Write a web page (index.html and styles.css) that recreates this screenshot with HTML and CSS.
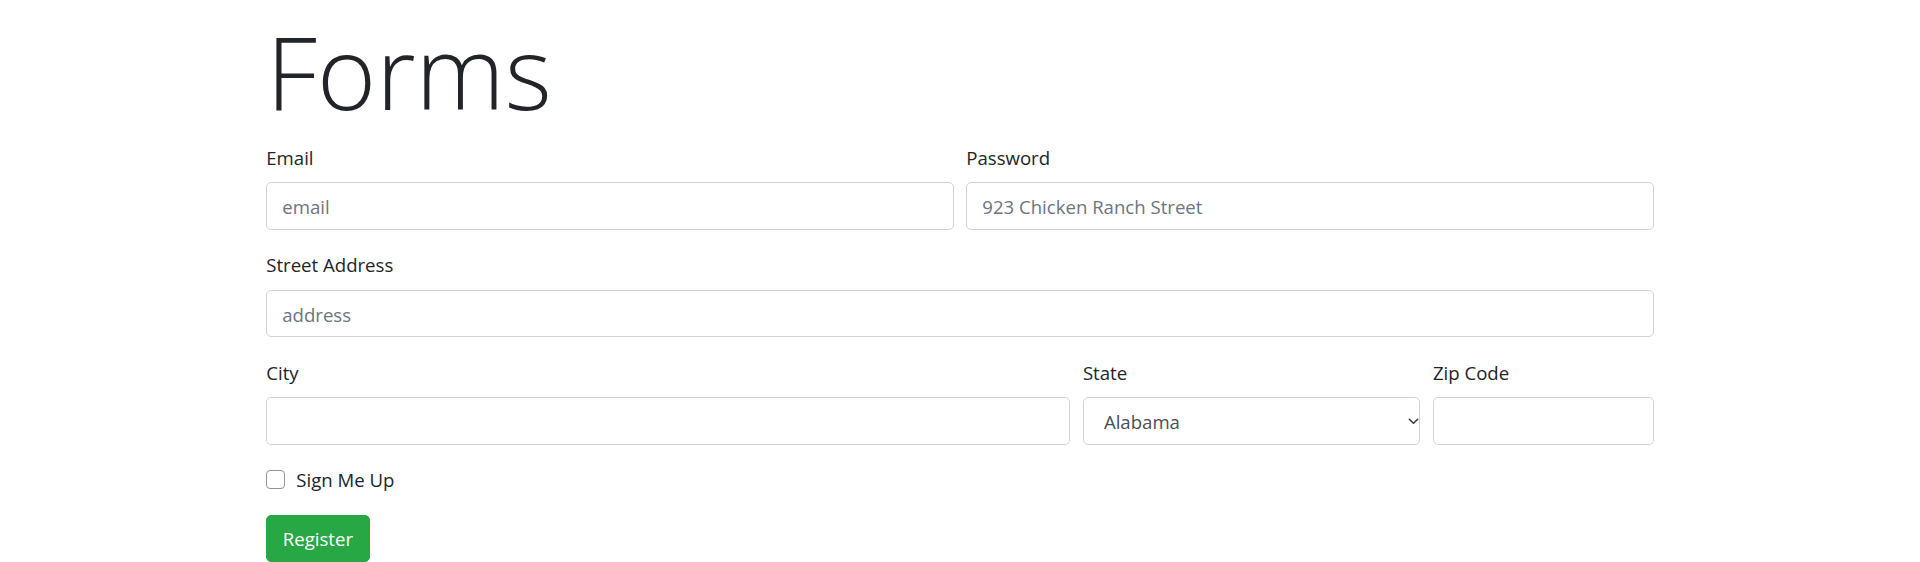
FILE: index.html
```html
<!DOCTYPE html>
<html lang="en">
<head>
<meta charset="utf-8">
<title>Forms</title>
<link rel="stylesheet" href="styles.css">
</head>
<body>
<div class="container">
  <h1 class="display">Forms</h1>
  <form class="form">
    <div class="row">
      <div class="group col-6">
        <label class="label" for="email">Email</label>
        <input class="control" id="email" type="email" placeholder="email">
      </div>
      <div class="group col-6">
        <label class="label" for="password">Password</label>
        <input class="control" id="password" type="password" placeholder="923 Chicken Ranch Street">
      </div>
    </div>
    <div class="group">
      <label class="label" for="address">Street Address</label>
      <input class="control" id="address" type="text" placeholder="address">
    </div>
    <div class="row">
      <div class="group col-7">
        <label class="label" for="city">City</label>
        <input class="control" id="city" type="text">
      </div>
      <div class="group col-3">
        <label class="label" for="state">State</label>
        <div class="select-wrap">
          <select class="control select" id="state">
            <option>Alabama</option>
            <option>Alaska</option>
            <option>Arizona</option>
          </select>
          <svg class="chevron" viewBox="0 0 12 8" width="11" height="7" aria-hidden="true"><path d="M1.2 1.4 L6 6 L10.8 1.4" fill="none" stroke="#343a40" stroke-width="1.8" stroke-linecap="round" stroke-linejoin="round"/></svg>
        </div>
      </div>
      <div class="group col-2">
        <label class="label" for="zip">Zip Code</label>
        <input class="control" id="zip" type="text">
      </div>
    </div>
    <div class="group check">
      <input class="check-box" id="signup" type="checkbox">
      <label class="check-label" for="signup">Sign Me Up</label>
    </div>
    <button class="btn" type="submit">Register</button>
  </form>
</div>
</body>
</html>
```

FILE: styles.css
```css
html, body {
  margin: 0;
  padding: 0;
  overflow: hidden;
  background: #fff;
}
body {
  font-family: "Open Sans", "Noto Sans", "Liberation Sans", sans-serif;
  font-size: 18.6px;
  line-height: 30px;
  color: #212529;
}
.container {
  width: 1387.5px;
  margin: 0 auto;
}
.display {
  box-sizing: border-box;
  margin: 0 0 10px 0;
  padding-top: 12px;
  height: 132px;
  font-size: 101px;
  font-weight: 300;
  line-height: 118px;
}
.form {
  margin: 0;
}
.row {
  display: flex;
  margin: 0 -6.25px;
}
.row > .group {
  padding: 0 6.25px;
  box-sizing: border-box;
}
.col-6 { flex: 0 0 50%; }
.col-7 { flex: 0 0 58.3333%; }
.col-3 { flex: 0 0 25%; }
.col-2 { flex: 0 0 16.6667%; }
.group {
  margin-bottom: 20px;
}
.label {
  display: block;
  box-sizing: border-box;
  height: 30px;
  padding-top: 0.5px;
  margin-bottom: 10px;
}
.control {
  display: block;
  box-sizing: border-box;
  width: 100%;
  height: 47.5px;
  margin: 0;
  padding: 2px 15px 0 15px;
  font: inherit;
  color: #495057;
  background: #fff;
  border: 1.25px solid #ced4da;
  border-radius: 5px;
  outline: none;
}
.control::placeholder {
  color: #6c757d;
  opacity: 1;
}
.select-wrap {
  position: relative;
}
.select {
  appearance: none;
  -webkit-appearance: none;
  padding-left: 20px;
  color: #495057;
}
.chevron {
  position: absolute;
  right: 1.5px;
  top: 20.5px;
  pointer-events: none;
}
.check {
  display: flex;
  align-items: center;
  height: 30px;
}
.check-box {
  appearance: none;
  -webkit-appearance: none;
  box-sizing: border-box;
  width: 19px;
  height: 19px;
  margin: 0 11px 0 0;
  border: 1.3px solid #8f959e;
  border-radius: 4px;
  background: #fff;
}
.check-label {
  line-height: 30px;
  padding-top: 1.5px;
}
.btn {
  display: block;
  box-sizing: border-box;
  height: 47.5px;
  padding: 1px 15.5px 0 15.5px;
  font: inherit;
  color: #fff;
  background: #28a745;
  border: 1.25px solid #28a745;
  border-radius: 5px;
}
```
